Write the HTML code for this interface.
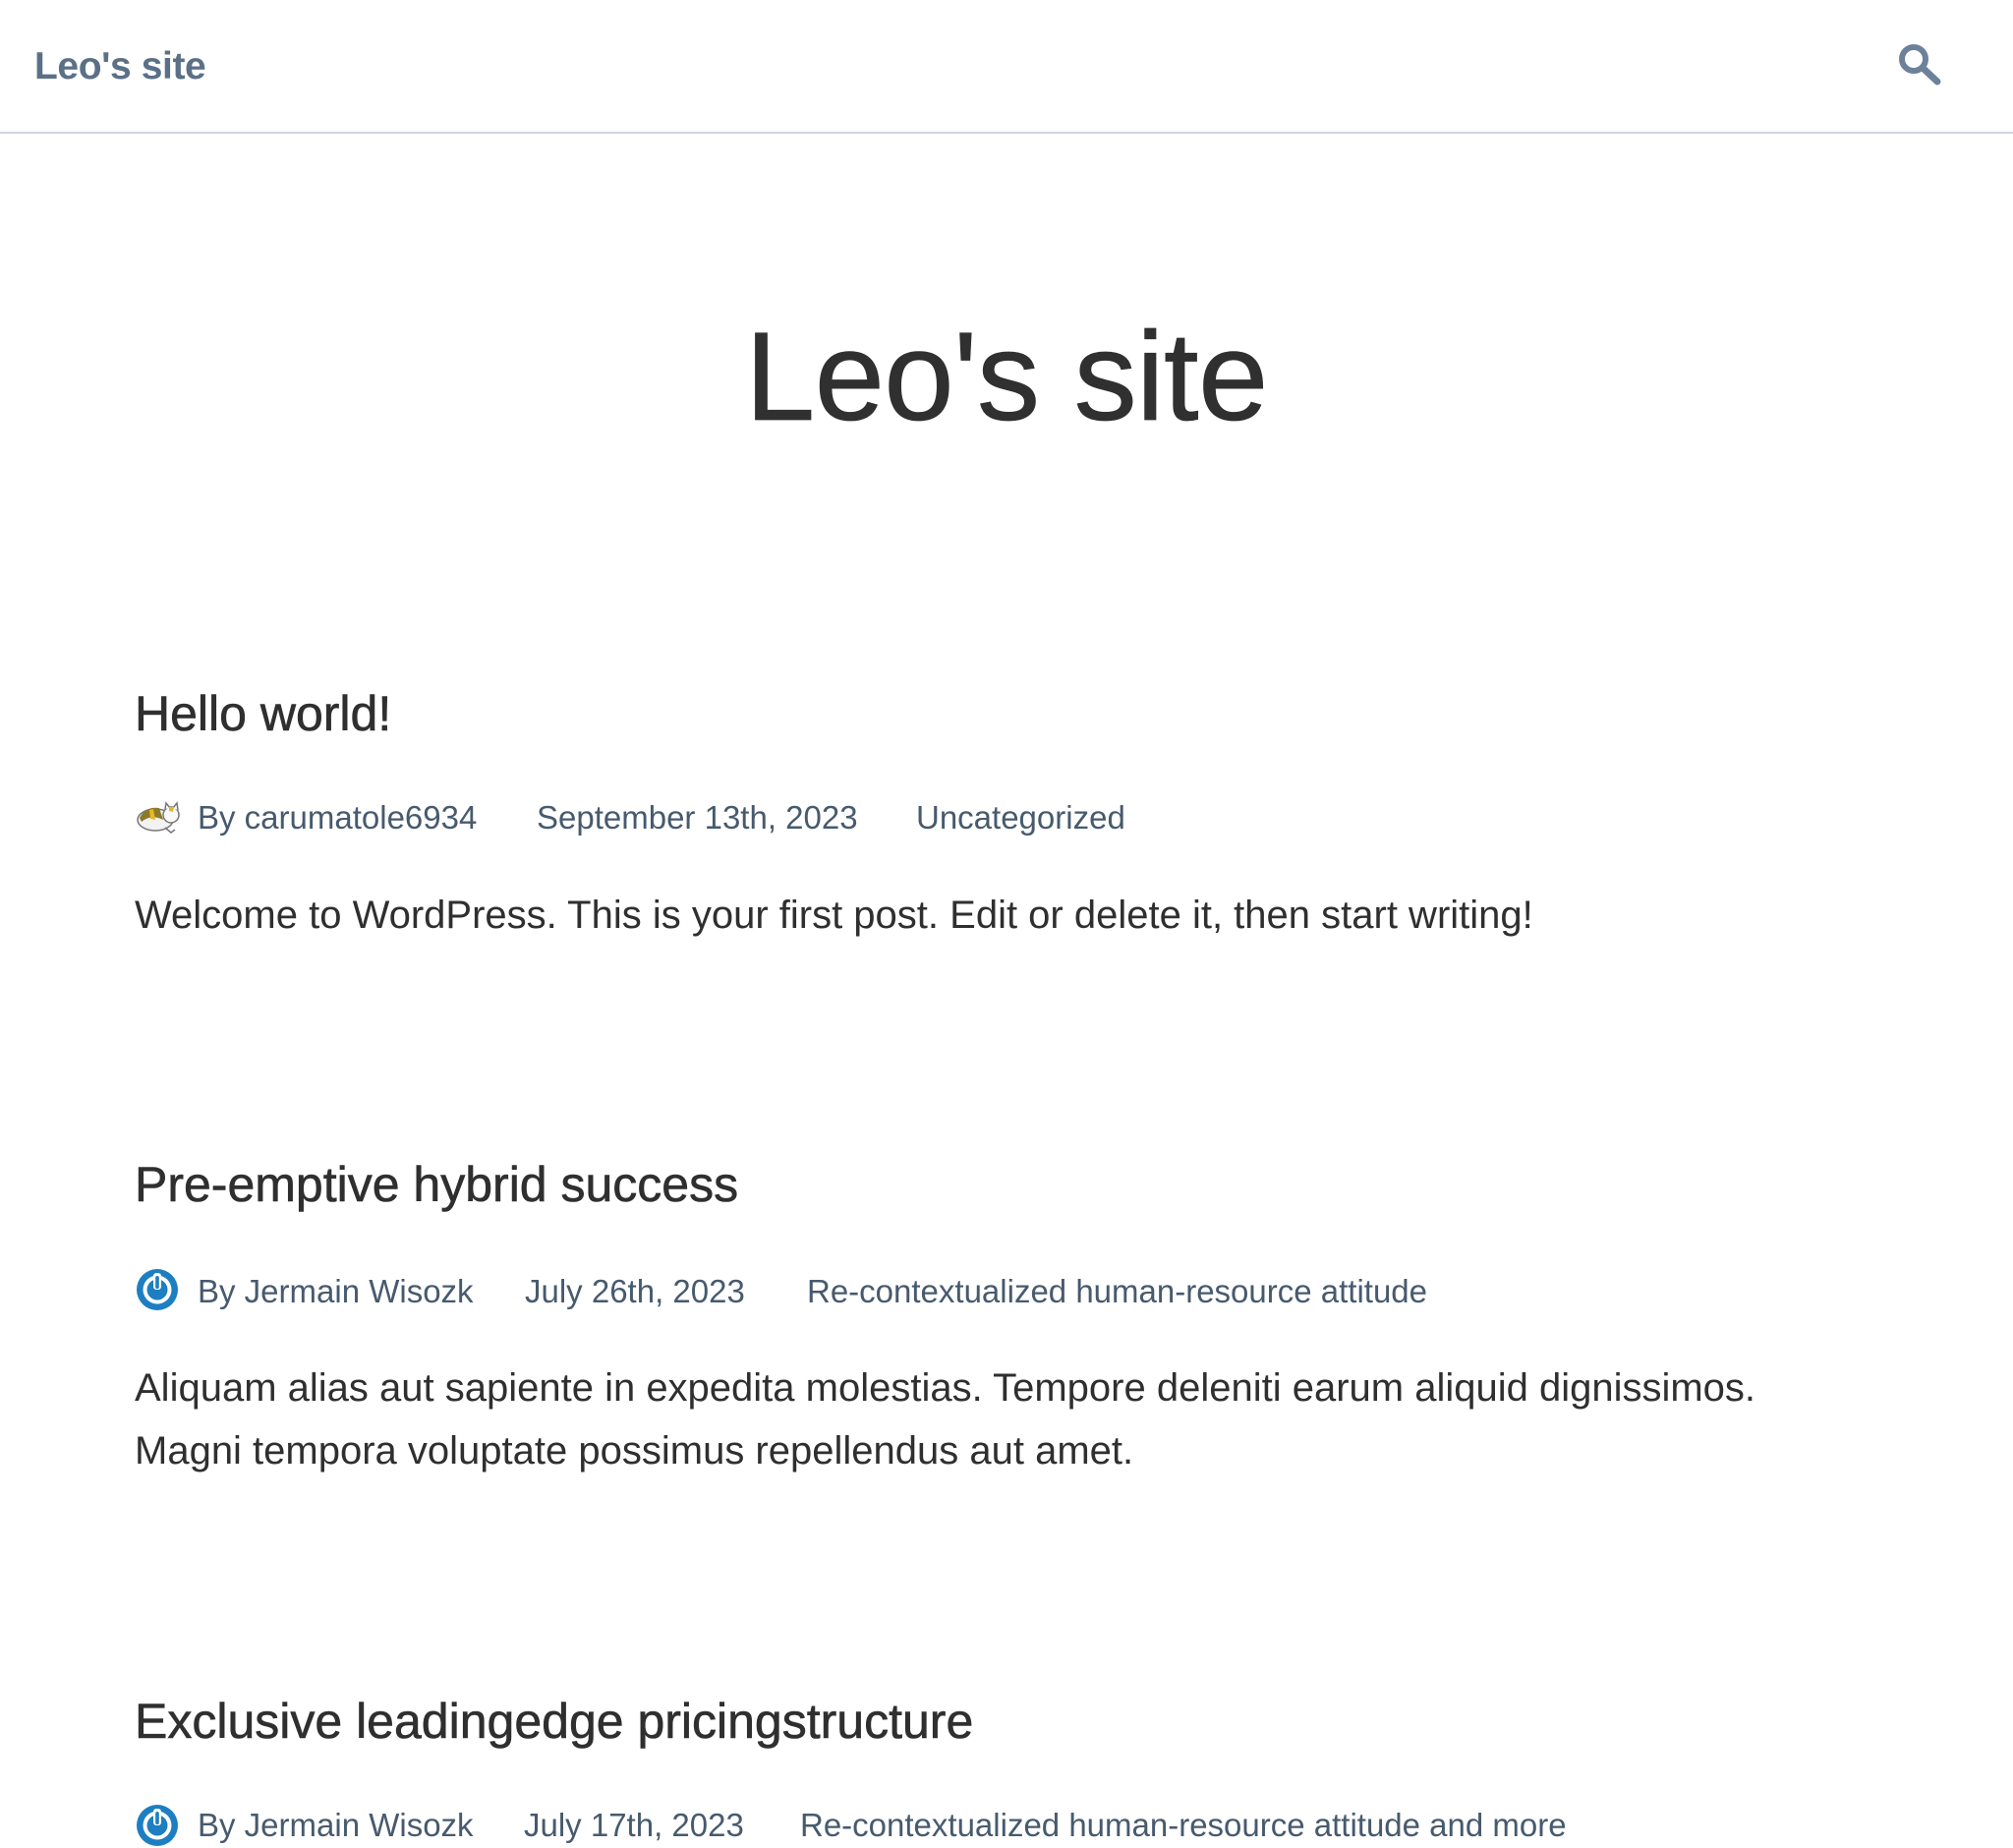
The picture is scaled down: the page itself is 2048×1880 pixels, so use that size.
<!DOCTYPE html>
<html><head><meta charset="utf-8"><style>
html,body{margin:0;padding:0;background:#fff;}
body{width:2048px;height:1880px;position:relative;overflow:hidden;font-family:"Liberation Sans",sans-serif;}
.a{position:absolute;white-space:nowrap;line-height:1;}
.hd{left:35px;top:48px;font-size:39px;font-weight:bold;color:#5b7087;letter-spacing:-0.4px;}
.bar{position:absolute;left:0;top:134px;width:2048px;height:2px;background:#cfd6de;}
.big{left:758px;top:320px;font-size:128px;color:#303030;letter-spacing:-0.5px;-webkit-text-stroke:0.8px #303030;}
.t{font-size:50px;color:#2f2f2f;left:137px;-webkit-text-stroke:0.6px #2f2f2f;}
.m{font-size:33px;color:#475a6e;}
.b{font-size:40px;color:#2f2f2f;left:137px;}
</style></head><body>
<div class="a hd">Leo's site</div>
<svg style="position:absolute;left:1925px;top:40px" width="56" height="52" viewBox="0 0 56 52">
<circle cx="22" cy="20" r="12" fill="none" stroke="#6c819a" stroke-width="6"/>
<line x1="31" y1="29" x2="46" y2="43" stroke="#6c819a" stroke-width="7" stroke-linecap="round"/>
</svg>
<div class="bar"></div>
<div class="a big">Leo's site</div>

<div class="a t" style="top:701px">Hello world!</div>
<svg style="position:absolute;left:138px;top:814px" width="46" height="36" viewBox="0 0 46 36">
<ellipse cx="20" cy="20" rx="18" ry="11" fill="#f2f2f2" stroke="#777" stroke-width="1.5"/>
<path d="M4 18 Q10 6 24 8 L28 20 Q16 14 6 22Z" fill="#8a7a2a"/>
<path d="M14 10 L18 9 L20 20 L15 19Z" fill="#e8b820"/>
<circle cx="36" cy="15" r="8" fill="#fafafa" stroke="#777" stroke-width="1.5"/>
<path d="M30 9 L31 3 L35 8 M38 8 L42 3 L43 10" fill="#fff" stroke="#777" stroke-width="1.5"/>
<path d="M34 7 L39 7 L38 12 L34 11Z" fill="#e8b820"/>
<path d="M30 28 L36 33 L40 30" fill="none" stroke="#777" stroke-width="1.5"/>
</svg>
<div class="a m" style="left:201px;top:815px">By carumatole6934</div>
<div class="a m" style="left:546px;top:815px">September 13th, 2023</div>
<div class="a m" style="left:932px;top:815px">Uncategorized</div>
<div class="a b" style="top:911px">Welcome to WordPress. This is your first post. Edit or delete it, then start writing!</div>

<div class="a t" style="top:1180px">Pre-emptive hybrid success</div>
<svg style="position:absolute;left:137px;top:1289px" width="46" height="46" viewBox="0 0 46 46">
<circle cx="23" cy="23" r="21" fill="#1d7fc1"/>
<circle cx="23" cy="23" r="14.5" fill="#fff"/>
<circle cx="23" cy="23" r="10.5" fill="#1d7fc1"/>
<rect x="19" y="6" width="8" height="17" rx="3" fill="#fff"/>
<rect x="21.2" y="9" width="3.6" height="13" rx="1.8" fill="#1d7fc1"/>
</svg>
<div class="a m" style="left:201px;top:1297px">By Jermain Wisozk</div>
<div class="a m" style="left:534px;top:1297px">July 26th, 2023</div>
<div class="a m" style="left:821px;top:1297px">Re-contextualized human-resource attitude</div>
<div class="a b" style="top:1392px">Aliquam alias aut sapiente in expedita molestias. Tempore deleniti earum aliquid dignissimos.</div>
<div class="a b" style="top:1456px">Magni tempora voluptate possimus repellendus aut amet.</div>

<div class="a t" style="top:1726px">Exclusive leadingedge pricingstructure</div>
<svg style="position:absolute;left:137px;top:1834px" width="46" height="46" viewBox="0 0 46 46">
<circle cx="23" cy="23" r="21" fill="#1d7fc1"/>
<circle cx="23" cy="23" r="14.5" fill="#fff"/>
<circle cx="23" cy="23" r="10.5" fill="#1d7fc1"/>
<rect x="19" y="6" width="8" height="17" rx="3" fill="#fff"/>
<rect x="21.2" y="9" width="3.6" height="13" rx="1.8" fill="#1d7fc1"/>
</svg>
<div class="a m" style="left:201px;top:1840px">By Jermain Wisozk</div>
<div class="a m" style="left:533px;top:1840px">July 17th, 2023</div>
<div class="a m" style="left:814px;top:1840px">Re-contextualized human-resource attitude and more</div>
</body></html>
